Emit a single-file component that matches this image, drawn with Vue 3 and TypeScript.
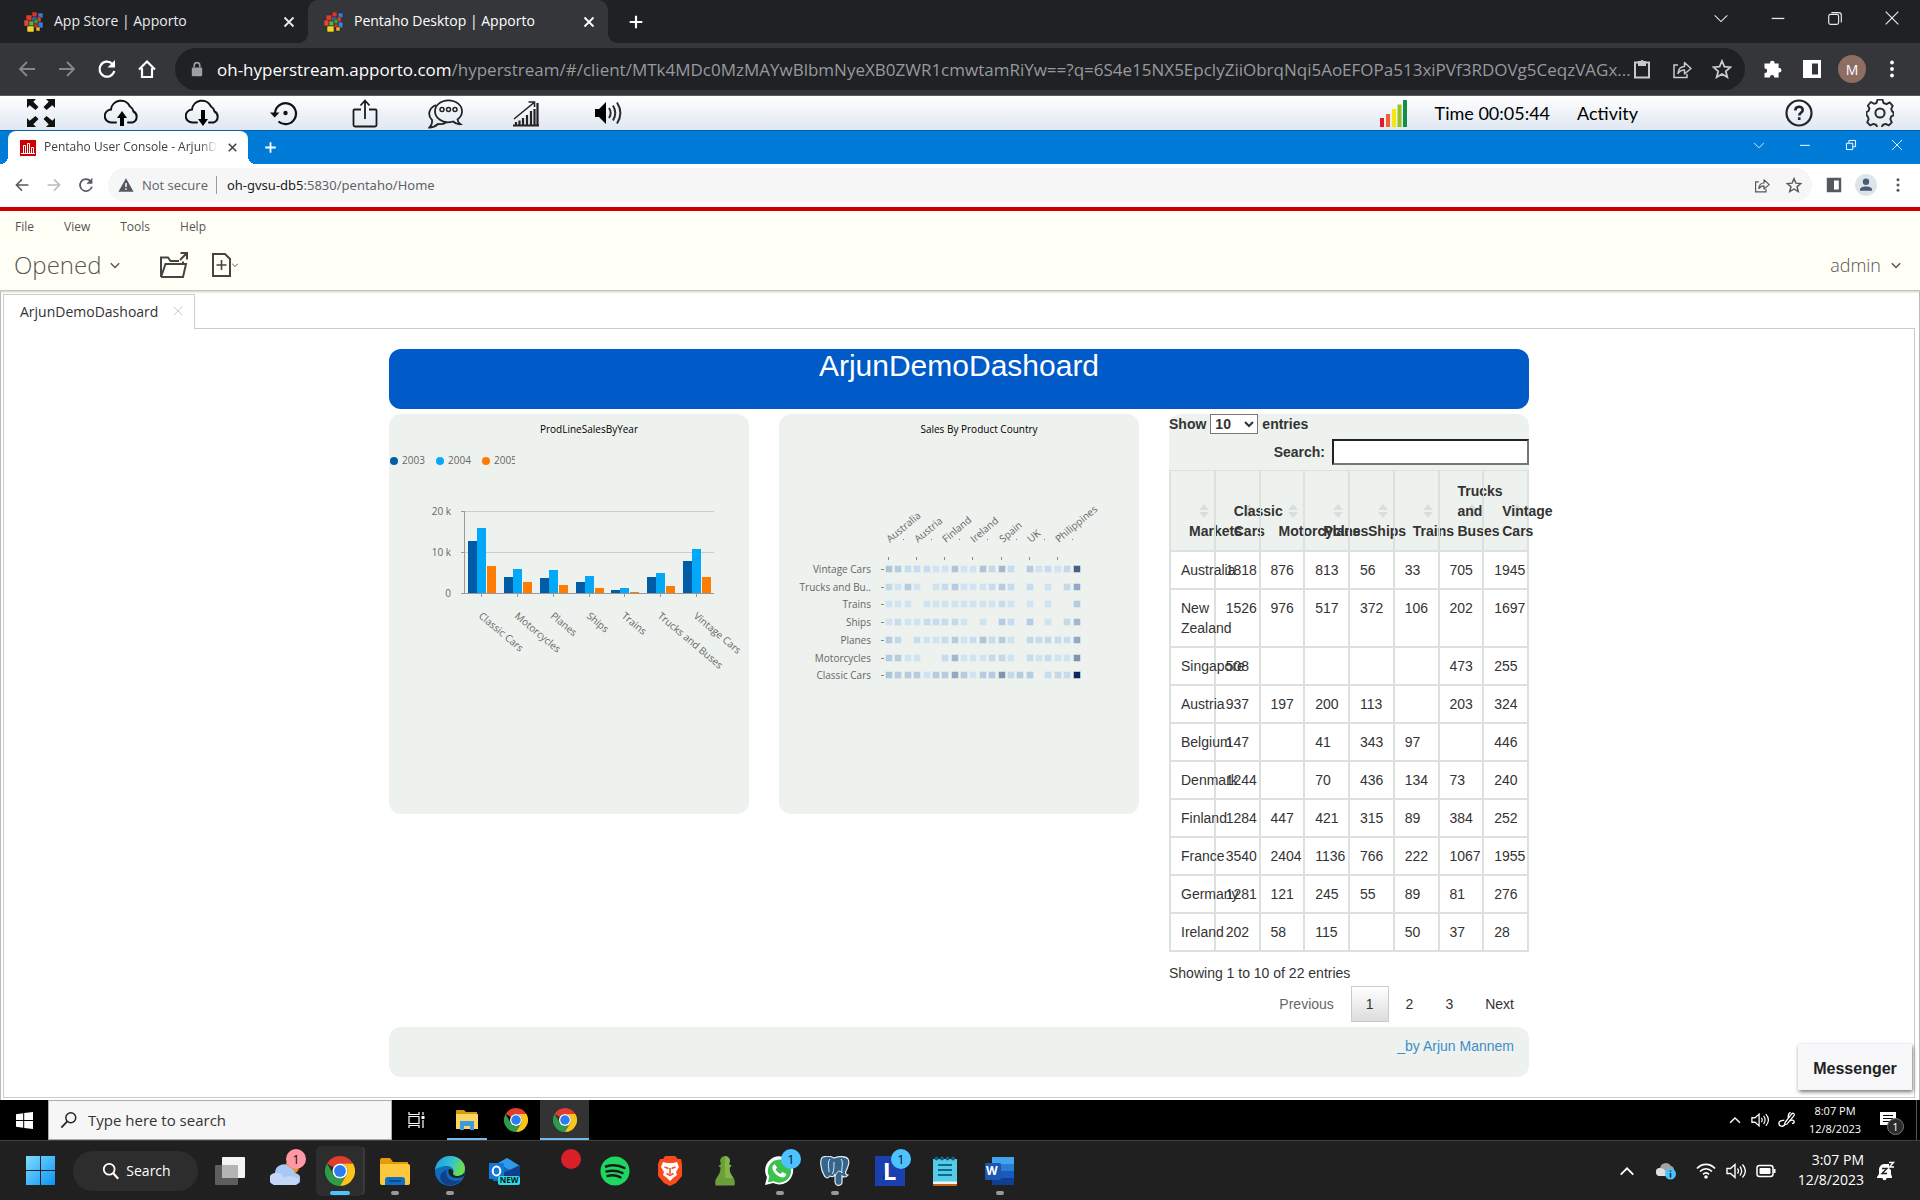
<script setup lang="ts">
const icons: Record<string, string> = {
  apporto:
    '<g stroke="#20201a" stroke-width=".5"><rect x="8" y="0" width="5" height="5" fill="#d8342a"/><rect x="14" y="1" width="5" height="5" rx="1" fill="#3a7bdc"/><rect x="2" y="3" width="6" height="6" rx="1" fill="#e23b2e"/><rect x="8" y="5" width="5" height="5" fill="#2f6fd0"/><rect x="13" y="5" width="4" height="5" rx="1" fill="#e2473a"/><rect x="14" y="10" width="5" height="6" rx="1" fill="#3a7bdc"/><rect x="0" y="8" width="5" height="6" fill="#e2473a"/><rect x="5" y="9" width="5" height="5" fill="#58b04a"/><rect x="10" y="7" width="4" height="5" fill="#3f9b3c"/><rect x="10" y="12" width="4" height="4" fill="#d93328"/><rect x="3" y="14" width="7" height="6" rx="1" fill="#f2d22e"/><rect x="12" y="15" width="4" height="4" fill="#e8b52c"/></g>',
  close: '<path d="M5 5l10 10M15 5L5 15" stroke="currentColor" stroke-width="2" fill="none"/>',
  plus: '<path d="M10 3v14M3 10h14" stroke="currentColor" stroke-width="2.4" fill="none"/>',
  chevThin: '<path d="M3 7l7 7 7-7" stroke="currentColor" stroke-width="1.2" fill="none"/>',
  chev: '<path d="M3 7l7 7 7-7" stroke="currentColor" stroke-width="2.4" fill="none"/>',
  chevUp: '<path d="M3 14l7-7 7 7" stroke="currentColor" stroke-width="2" fill="none"/>',
  minus: '<path d="M3 10.500h14" stroke="currentColor" stroke-width="1.400" fill="none"/>',
  restore11: '<rect x="3" y="6" width="11" height="11" rx="2" stroke="currentColor" stroke-width="1.3" fill="none"/><path d="M6 4h8a3 3 0 013 3v8" stroke="currentColor" stroke-width="1.300" fill="none"/>',
  restore10: '<path d="M3.500 7.500h9v9h-9zM7 7V3.500h9.500v9H13" stroke="currentColor" stroke-width="1.4" fill="none"/>',
  x: '<path d="M3 3l14 14M17 3L3 17" stroke="currentColor" stroke-width="1.3" fill="none"/>',
  back: '<path d="M18 10H3M10 3l-7 7 7 7" stroke="currentColor" stroke-width="1.900" fill="none"/>',
  forward: '<path d="M2 10h15M10 3l7 7-7 7" stroke="currentColor" stroke-width="1.900" fill="none"/>',
  reload: '<path d="M15.500 5A7.500 7.500 0 1017.300 12" stroke="currentColor" stroke-width="2.200" fill="none"/><path d="M18 1v7.500h-7.500z" fill="currentColor"/>',
  home: '<path d="M2 10.500L10 2.500l8 8M5 9v9h10V9" stroke="currentColor" stroke-width="2.2" fill="none"/>',
  lock: '<rect x="3.500" y="8" width="13" height="11" rx="1.500" fill="currentColor"/><path d="M6.500 8V5.500a3.500 3.500 0 017 0V8" stroke="currentColor" stroke-width="2" fill="none"/>',
  clipboard: '<path d="M3 3.500h14V18.500H3z" stroke="currentColor" stroke-width="2" fill="none"/><path d="M6 2h2.500a1.600 1.600 0 013 0H14v5H6z" fill="currentColor"/>',
  share: '<path d="M6 6H2v12.500h13V15" stroke="currentColor" stroke-width="1.500" fill="none"/><path d="M6 14.500c.5-5 3-7 6.500-7V3.500l6.500 6-6.500 5.500v-4c-3 0-4.800 1-6.500 3.500z" stroke="currentColor" stroke-width="1.500" stroke-linejoin="round" fill="none"/>',
  star: '<path d="M10 2l2.400 5.700 6.100.5-4.700 4 1.500 6L10 15l-5.300 3.200 1.500-6-4.700-4 6.100-.5z" stroke="currentColor" stroke-width="1.800" fill="none"/>',
  puzzle: '<path d="M8 4a2.300 2.300 0 014.600 0v.5h4V9h.6a2.300 2.300 0 010 4.600h-.6V18.500h-4.400V18a2 2 0 00-4.200 0v.5H2.500V14H3a2.200 2.200 0 000-4.400h-.5v-5H8z" fill="currentColor"/>',
  panelLight: '<path fill-rule="evenodd" d="M1 1h18v18H1zM10 4.500v11h6v-11z" fill="currentColor"/>',
  dots: '<circle cx="10" cy="3.500" r="1.900" fill="currentColor"/><circle cx="10" cy="10" r="1.900" fill="currentColor"/><circle cx="10" cy="16.500" r="1.900" fill="currentColor"/>',
  person: '<circle cx="10" cy="10" r="10" fill="#dce6e9"/><circle cx="10" cy="7" r="2.900" fill="#4a5a78"/><path d="M4.500 14.300c0-3.800 11-3.800 11 0v.9h-11z" fill="#4a5a78"/>',
  warn: '<path fill-rule="evenodd" d="M10 1.500L19.500 18.500H.5zM9 7.500v5h2v-5zM9 14v2h2v-2z" fill="currentColor"/>',
  expand: '<path d="M0 0h9L6.300 2.700 11.500 8 8.500 11 2.700 6.300 0 9zM28 0v9l-2.700-2.700L19.500 11l-3-3 5.200-5.300L19 0zM0 28v-9l2.700 2.700L8.500 17l3 3-5.200 5.300L9 28zM28 28h-9l2.700-2.700L16.500 20l3-3 5.800 4.700L28 19z" fill="#111"/>',
  cloudUp: '<path d="M12 23.500H7.500a6.500 6.500 0 01-.5-13A10 10 0 0126 7.500a7 7 0 013.500 5A6 6 0 0128.500 23.500H24" stroke="#111" stroke-width="2" fill="none" stroke-linecap="round"/><path d="M18 12l5 7h-3v8h-4v-8h-3z" fill="#000"/>',
  cloudDown: '<path d="M12 23.500H7.500a6.500 6.500 0 01-.5-13A10 10 0 0126 7.500a7 7 0 013.500 5A6 6 0 0128.500 23.500H24" stroke="#111" stroke-width="2" fill="none" stroke-linecap="round"/><path d="M18 27l-5-7h3v-9h4v9h3z" fill="#000"/>',
  history: '<path d="M5 13A10.500 10.500 0 118.500 21.500" stroke="#111" stroke-width="2.200" fill="none"/><path d="M0 12.500h9.500L4.700 17.500z" fill="#111"/><circle cx="15.500" cy="13" r="2.200" fill="#111"/>',
  upload: '<path d="M9 10.500H2.500a1 1 0 00-1 1V26a1.500 1.500 0 001.500 1.500h20a1.500 1.500 0 001.500-1.500V11.500a1 1 0 00-1-1H17M13 20V2M8.500 6.500L13 1.500l4.500 5" stroke="#1c1c1c" stroke-width="1.800" fill="none"/>',
  chat: '<path d="M11.500 22.500a13.500 11 0 1118 0c.3 2.300 1.300 3.500 3 4.700-3 .2-5.500-.8-7.500-2.700-4.500 1.400-9.500 1-13.500-2z" stroke="#222" stroke-width="1.800" fill="none"/><path d="M8 8C1 11-1 18 4 23c.5 3-.5 5.500-2.500 7.500 4 0 6-1.200 8.500-3.500 3 .5 5.500.2 8-1.500" stroke="#222" stroke-width="1.800" fill="none"/><g stroke="#222" stroke-width="1.500" fill="none"><circle cx="14" cy="12.500" r="2"/><circle cx="20.500" cy="12.500" r="2"/><circle cx="27" cy="12.500" r="2"/></g>',
  chart: '<path d="M0 25.500h26M3 25v-3M6.500 25v-4.500M10 25v-7M14 25V15M18 25V11M21.500 25V9M24.500 25V3" stroke="#222" stroke-width="2.200" fill="none"/><path d="M1 19L20.500 3M15.500 2h6v5" stroke="#222" stroke-width="1.600" fill="none"/>',
  speaker: '<path d="M1 8h4l7-7v22l-7-7H1z" fill="#000"/><path d="M15 7c2 3 2 7 0 10M19 4.500c3 5 3 10 0 15M23 1.500c4.500 7 4.500 14 0 21" stroke="#2b2b2b" stroke-width="2" fill="none"/>',
  signal: '<path d="M0 18h4v9H0z" fill="#e2182c"/><path d="M6 14h4v13H6z" fill="#f0642a"/><path d="M12 9h4v18h-4z" fill="#f6e60c"/><path d="M17.500 4.500h4V27h-4z" fill="#98c21f"/><path d="M23 0h4v27h-4z" fill="#119048"/>',
  help: '<circle cx="14" cy="14" r="12.500" stroke="#242424" stroke-width="2.200" fill="none"/><path d="M10.300 11.500c0-5 7.400-5 7.400-.5 0 2.800-3.500 2.600-3.500 5.500M14.200 18.300v2.800" stroke="#242424" stroke-width="2.600" fill="none"/>',
  gear: '<path d="M11.500 1.500h5l1 3.500 3 1.200 3.200-1.800 3 3.500-1.500 3 .9 2.500 1.500 1v3l-2.300 1-1 2.800 1.500 3.200-3 3-3.300-1.500-2.800 1.100-1.200 3h-4l-1.200-3-2.800-1.100-3.300 1.500-3-3 1.500-3.200-1-2.800L.5 17v-3l2-1 .9-2.500-1.500-3 3-3.500L8 5.800 10.500 5z" transform="translate(0 -1)" stroke="#2a2a2a" stroke-width="1.900" stroke-linejoin="round" fill="none"/><circle cx="14" cy="14" r="4.600" stroke="#2a2a2a" stroke-width="2" fill="none"/>',
  pentaho: '<rect width="16" height="16" fill="#c00"/><path d="M1 13.500h14M3.500 13V5.500h2V13M7.500 13V3.500h2V13M11.500 13V7.500h2V13" stroke="#fff" stroke-width="1" fill="none"/>',
  openFolder: '<path d="M1 25V5.500h7l2.500 3.500H19M1 25h22l3-13H5.500L1 25M20 8l7-7M20.500 1H27v6.500M23 12V9.500" stroke="#444" stroke-width="2" fill="none"/>',
  newDoc: '<path d="M1 1h12l5 5v17H1z" stroke="#444" stroke-width="2" fill="none"/><path d="M9.500 7v10M4.500 12h10" stroke="#444" stroke-width="1.600" fill="none"/>',
  win10: '<path d="M0 2.300L7.200 1.200V8H0zM8.200 1L17 0v8H8.200zM0 9h7.200v6.800L0 14.700zM8.200 9H17v8l-8.800-1z" fill="#fff"/>',
  win11: '<defs><linearGradient id="w11" x1="0" y1="0" x2="1" y2="1"><stop offset="0" stop-color="#7fdcff"/><stop offset="1" stop-color="#0a93f5"/></linearGradient></defs><path d="M0 0h14v14H0zM15 0h14v14H15zM0 15h14v14H0zM15 15h14v14H15z" fill="url(#w11)"/>',
  glass: '<circle cx="12" cy="7.500" r="5.500" stroke="currentColor" stroke-width="1.600" fill="none"/><path d="M8 11.500L1.500 18.500" stroke="currentColor" stroke-width="1.800"/>',
  glassR: '<circle cx="8" cy="8" r="6" stroke="currentColor" stroke-width="2" fill="none"/><path d="M12.500 12.500L18 18.500" stroke="currentColor" stroke-width="2.400"/>',
  taskView10: '<path d="M1 1v2.500h10V1M1 17v-2.500h10V17M1 5.500h10v7H1zM15 1v3M15 9v8" stroke="#fff" stroke-width="1.200" fill="none"/><path d="M13.500 5h3v3h-3z" fill="#fff"/>',
  folder10: '<path d="M0 1a1 1 0 011-1h7l2 2h11v6H0z" fill="#d79a0b"/><path d="M0 4h22v15H0z" fill="#fcd462"/><path d="M4 20v-9h14v9h-4v-4H8v4z" fill="#3c9be0"/>',
  chrome: '<path d="M24 0A24 24 0 0144.800 12H24a12 12 0 00-10.400 6L3.200 12A24 24 0 0124 0z" fill="#e33b2e"/><path d="M3.200 12A24 24 0 0024 48l10.400-18a12 12 0 01-20.800 0z" fill="#2c9c4a"/><path d="M44.800 12A24 24 0 0124 48l10.400-18A12 12 0 0024 12z" fill="#fcc419"/><circle cx="24" cy="24" r="12" fill="#fff"/><circle cx="24" cy="24" r="9.500" fill="#2f7bf0"/>',
  taskView11: '<rect x="0" y="8" width="23" height="20" rx="1" fill="#5e5e5e"/><rect x="7" y="0" width="23" height="21" rx="1" fill="#f4f4f4"/><path d="M7 8h16v13H7z" fill="#b4b4b4"/>',
  weather: '<circle cx="22" cy="10" r="7" fill="#f28a1e"/><path d="M6 28a6 6 0 01-1-12 8.500 8.500 0 0115-5.500A8 8 0 0125 16a6 6 0 01-1 12z" fill="#a9c7f5"/><path d="M6 28a6 6 0 01-1-12c4-1 8 1 8 5 5-3 12-2 16 1a6 6 0 01-5 6z" fill="#c3d7f8"/>',
  folder11: '<path d="M0 3a2 2 0 012-2h8l3 4h15v8H0z" fill="#e59a0c"/><path d="M0 7h28a2 2 0 012 2v17a2 2 0 01-2 2H2a2 2 0 01-2-2z" fill="#fdc83c"/><path d="M5 28v-5a3 3 0 013-3h14a3 3 0 013 3v5z" fill="#0f6fc5"/><path d="M9 24h12" stroke="#0a4a90" stroke-width="2"/>',
  edge: '<defs><linearGradient id="eg" x1="0" y1="0" x2="1" y2=".3"><stop offset="0" stop-color="#1b9de2"/><stop offset=".6" stop-color="#35c1d0"/><stop offset="1" stop-color="#6be04b"/></linearGradient></defs><circle cx="15" cy="15" r="15" fill="#0f6cbd"/><path d="M0 14C1 5 8 0 15 0c9 0 15 6 15 12.500 0 5-4 7.500-8 7.500-3 0-5-1-4-3 2-3-1-7-6-7-5 0-10 2-12 4z" fill="url(#eg)"/><path d="M12 14c-3 7 4 13 14 10-5 6-13 7-18 3-5-5-3-11 4-13z" fill="#123f8a"/><path d="M14 13c-2 4 1 9 8 9 3 0 5-1 7-2l1-3-3 2c-4 2-8 1-9-1 1-3-1-5-4-5z" fill="#202020"/>',
  outlook: '<path d="M4 10L18 1l13 9v14H4z" fill="#1568c0"/><path d="M9 6l9-5 13 8-7 6z" fill="#2f9ae8"/><path d="M14 16l17-8v16H14z" fill="#0d3f8e"/><rect x="0" y="6" width="15" height="16" rx="1" fill="#1177d8"/><ellipse cx="7.500" cy="14" rx="3.800" ry="4.500" stroke="#fff" stroke-width="2" fill="none"/><rect x="9" y="19" width="22" height="9" rx="2" fill="#27e0e8"/>',
  spotify: '<circle cx="15" cy="15" r="14.500" fill="#1ed760"/><path d="M6 10.500c6-2 13-1.500 18.500 1.500M6.500 15.500c5.500-1.500 11-1 16 1.500M7.500 20c4.500-1.200 9-.8 13 1.300" stroke="#1c1c1c" stroke-width="2.500" fill="none" stroke-linecap="round"/>',
  brave: '<path d="M8 0h10l3 3 3 0 1 5 0 12-6 7-6 3-6-3-6-7L1 8l2-5 3 0z" fill="#fb4a1c"/><path d="M6 6l4 1h6l4-1 2 5-3 5 1 3-4 3-3 3-3-3-4-3 1-3-3-5z" fill="#fff"/><path d="M7.500 11l4 1.500M18.500 11l-4 1.500M13 12v6M9.500 17.500l3.500 2 3.500-2" stroke="#fb4a1c" stroke-width="1.500" fill="none"/>',
  chess: '<path d="M10 0a5 5 0 014 8l2.500 2-2 1.500c0 5 1.500 7 4 10.500 1.500 2 1.500 5 1 7.500H.5C0 27 0 24 1.500 22c2.500-3.500 4-5.500 4-10.500L3.500 10 6 8a5 5 0 014-8z" fill="#6a9f3a"/><path d="M10 0a5 5 0 014 8l2.500 2-2 1.500c0 5 1.500 7 4 10.500H10z" fill="#82b64b"/>',
  whatsapp: '<path d="M0 30l2-8A14.500 14.500 0 118.500 28z" fill="#fff"/><path d="M3 27l1.500-5.500A12 12 0 119 26z" fill="#3cc14e"/><path d="M10 8.500l2.500 3.500-1.500 2c1 2 2.500 3.500 5 4.500l2-2 4 2c0 3-3 4-5 3.500C12 21 8 16 7.500 12.500c0-2 1-3.500 2.500-4z" fill="#fff"/>',
  pg: '<path d="M3 1c6-2 9 0 11 1 5-2 12-2 14 1s0 8-2 12c-1 2 0 4 2 4-2 3-5 2-6 1v6c0 4-6 5-7 0v-8c-1 3-3 3-5 2-2 3-5 2-6-1C1 14-1 3 3 1z" fill="#35648c" stroke="#e8eef4" stroke-width="1.200"/><path d="M10 3c-3 4-1 8-1 13M21 3c3 4 0 9 1 14M12 18c2-2 2-7 2-12M15 20c2-4 4-7 7-3" stroke="#e8eef4" stroke-width="1" fill="none"/>',
  lapp: '<path d="M0 0h30v30H0z" fill="#1c3fae"/><path d="M8 23l3-16v16z" fill="#0b1d5c"/>',
  notes: '<path d="M1 3h24v23H1z" fill="#58cbe4"/><path d="M1 26h24v3a1 1 0 01-1 1H2a1 1 0 01-1-1z" fill="#c46316"/><path d="M1 25.500h24V28H1z" fill="#f3f3f3"/><path d="M6 9h14M6 14h14M6 19h14" stroke="#0a6b90" stroke-width="2"/><g fill="#0d5f83"><circle cx="4.500" cy="2.500" r="2"/><circle cx="10" cy="2.500" r="2"/><circle cx="15.500" cy="2.500" r="2"/><circle cx="21" cy="2.500" r="2"/></g>',
  word: '<path d="M7 0h22v7H7z" fill="#41a5ee"/><path d="M7 7h22v7H7z" fill="#2b7cd3"/><path d="M7 14h22v7H7z" fill="#185abd"/><path d="M7 21h22v7H7z" fill="#103f91"/><rect x="0" y="6" width="16" height="17" rx="1.500" fill="#1a56b4"/>',
  speakerThin: '<path d="M1 7.500h3.500L9 3.500v13L4.500 12.500H1z" stroke="currentColor" stroke-width="1.400" fill="none"/><path d="M11.500 7.500c1.200 1.500 1.200 3.500 0 5M14 5.500c2.200 3 2.200 6 0 9M16.500 3.500c3.500 4 3.500 9 0 13" stroke="currentColor" stroke-width="1.300" fill="none"/>',
  pen: '<path d="M8 12.500l7-9c1.500-2 4-.5 2.800 1.700L10 14.500l-3 .8z" stroke="currentColor" stroke-width="1.400" fill="none"/><path d="M11.500 8c-.5-3 .5-5.500 2.500-6.500M7 10.500c-3-.5-6 .5-6 3.500s4.500 4 6.500 1.500M13 11c2-1.500 5-1 5 1s-2.500 2-2.500 2" stroke="currentColor" stroke-width="1.500" fill="none"/>',
  action: '<path d="M0 0h16v13h-5l-3 3v-3H0z" fill="#fff"/><path d="M3 3.500h10M3 6.500h10M3 9.500h10" stroke="#000" stroke-width="1.200"/>',
  cloudInfo: '<path d="M4 15a4 4 0 010-8 6 6 0 0111-2 4 4 0 013 4v6z" fill="#a3a3a3"/><path d="M4 15a4 4 0 010-8c4 0 6 3 8 8z" fill="#e0e0e0"/><circle cx="14.500" cy="13" r="5.500" fill="#4cc2ff"/><path d="M14.500 12v4.500M14.500 9.500v1.300" stroke="#10303f" stroke-width="1.600"/>',
  wifi: '<path d="M1 7.500c5-5.500 13-5.500 18 0M4 10.500c3.500-3.700 8.500-3.700 12 0M7 13.300c2-2 4-2 6 0" stroke="currentColor" stroke-width="1.700" fill="none"/><circle cx="10" cy="16" r="1.800" fill="currentColor"/>',
  battery: '<rect x="1" y="4.500" width="16" height="11" rx="2.500" stroke="currentColor" stroke-width="1.500" fill="none"/><rect x="3.500" y="7" width="11" height="6" rx="1" fill="currentColor"/><path d="M18.500 8v4" stroke="currentColor" stroke-width="2"/>',
  bell: '<path d="M8.500 3C5 3 3 6 3 9v4l-2 3v1h15v-1l-1-3V9" fill="currentColor"/><path d="M6.500 17h4c0 3-4 3-4 0z" fill="currentColor"/><path d="M8 3h5v10H6z" fill="currentColor"/><path d="M6 7.500h5L6 12.500h5" stroke="#202020" stroke-width="1.400" fill="none"/><path d="M13 1.500h4.500L13.500 6H18" stroke="currentColor" stroke-width="1.400" fill="none"/>',
}

interface Control { icon: string; label: string }
const outerWindow: Control[] = [
  { icon: 'chevThin', label: 'Search tabs' },
  { icon: 'minus', label: 'Minimize' },
  { icon: 'restore11', label: 'Restore' },
  { icon: 'x', label: 'Close' },
]
const innerWindow: Control[] = outerWindow.map((c) => (c.icon === 'restore11' ? { ...c, icon: 'restore10' } : c))

const sessionTools = [
  { icon: 'expand', label: 'Full screen', w: 28, h: 28 },
  { icon: 'cloudUp', label: 'Upload file', w: 36, h: 28 },
  { icon: 'cloudDown', label: 'Download file', w: 36, h: 28 },
  { icon: 'history', label: 'Restart', w: 28, h: 26 },
  { icon: 'upload', label: 'Share', w: 26, h: 29 },
  { icon: 'chat', label: 'Chat', w: 36, h: 32 },
  { icon: 'chart', label: 'Performance', w: 27, h: 27 },
  { icon: 'speaker', label: 'Sound', w: 28, h: 24 },
]

const menus = ['File', 'View', 'Tools', 'Help']

/* Bar chart: heights in plot units, 41 units per 10 k */
const years = [
  { label: '2003', color: '#005ca7', x: 5 },
  { label: '2004', color: '#03a9f8', x: 51 },
  { label: '2005', color: '#ff7c00', x: 97 },
]
const lines = [
  { label: 'Classic Cars', x: 92, bars: [52, 65, 27] },
  { label: 'Motorcycles', x: 128, bars: [16, 24, 11] },
  { label: 'Planes', x: 164, bars: [15, 23, 8] },
  { label: 'Ships', x: 200, bars: [11, 17, 5] },
  { label: 'Trains', x: 235, bars: [3, 5, 1] },
  { label: 'Trucks and Buses', x: 271, bars: [16, 20, 7] },
  { label: 'Vintage Cars', x: 307, bars: [32, 44, 16] },
]
const barOffset = [-13, -4, 6]

/* Heat grid: one letter per country, darker further down the alphabet */
const shades: Record<string, string> = {
  a: '#d0e3f0', b: '#c6dcf0', c: '#c4dae6', d: '#b6cde0', e: '#adc5d4',
  f: '#a3b8cf', g: '#92a9c5', h: '#7f96b2', i: '#45608a', j: '#0a2a5c',
}
const heat = [
  { label: 'Vintage Cars', cells: 'edbbbaaeaaecfb-dabaci' },
  { label: 'Trucks and Bu..', cells: 'cada-abdaaabdb-b-a-cg' },
  { label: 'Trains', cells: 'aaa-aaaaaaaaba-a-a--d' },
  { label: 'Ships', cells: 'abaabbbca-a-db-d-a-cf' },
  { label: 'Planes', cells: 'dc-baabdabebda-cbcbbg' },
  { label: 'Motorcycles', cells: 'ddaa--bfaaacca-babaah' },
  { label: 'Classic Cars', cells: 'edddaddgdaddhcdd-bcbj' },
]
const countries = ['Australia', 'Austria', 'Finland', 'Ireland', 'Spain', 'UK', 'Philippines']
const colX = (i: number): number => Math.round(110 + i * 9.38)
const rowY = (i: number): number => Math.round(155 + i * 17.7)

const headers = ['Markets', 'Classic Cars', 'Motorcycles', 'Planes', 'Ships', 'Trains', 'Trucks and Buses', 'Vintage Cars']
const rows: string[][] = [
  ['Australia', '1818', '876', '813', '56', '33', '705', '1945'],
  ['New Zealand', '1526', '976', '517', '372', '106', '202', '1697'],
  ['Singapore', '508', '', '', '', '', '473', '255'],
  ['Austria', '937', '197', '200', '113', '', '203', '324'],
  ['Belgium', '147', '', '41', '343', '97', '', '446'],
  ['Denmark', '1244', '', '70', '436', '134', '73', '240'],
  ['Finland', '1284', '447', '421', '315', '89', '384', '252'],
  ['France', '3540', '2404', '1136', '766', '222', '1067', '1955'],
  ['Germany', '1281', '121', '245', '55', '89', '81', '276'],
  ['Ireland', '202', '58', '115', '', '50', '37', '28'],
]

interface TaskApp { icon: string; label: string; w: number; h: number; vb: string; run?: boolean; active?: boolean; badge?: string; tone?: string; text?: string; textCls?: string }
const apps: TaskApp[] = [
  { icon: 'taskView11', label: 'Task view', w: 30, h: 28, vb: '0 0 30 28' },
  { icon: 'weather', label: 'Weather', w: 30, h: 28, vb: '0 0 30 28', badge: '1', tone: 'pink' },
  { icon: 'chrome', label: 'Chrome', w: 30, h: 30, vb: '0 0 48 48', active: true },
  { icon: 'folder11', label: 'File Explorer', w: 30, h: 28, vb: '0 0 30 28', run: true },
  { icon: 'edge', label: 'Edge', w: 30, h: 30, vb: '0 0 30 30', run: true },
  { icon: 'outlook', label: 'Outlook', w: 31, h: 28, vb: '0 0 31 28', text: 'NEW', textCls: 'new' },
  { icon: '', label: 'Recorder', w: 30, h: 30, vb: '0 0 30 30', badge: ' ', tone: 'red' },
  { icon: 'spotify', label: 'Spotify', w: 30, h: 30, vb: '0 0 30 30' },
  { icon: 'brave', label: 'Brave', w: 26, h: 30, vb: '0 0 26 30' },
  { icon: 'chess', label: 'Chess', w: 20, h: 30, vb: '0 0 20 30' },
  { icon: 'whatsapp', label: 'WhatsApp', w: 30, h: 30, vb: '0 0 31 31', run: true, badge: '1', tone: 'blue' },
  { icon: 'pg', label: 'pgAdmin', w: 30, h: 30, vb: '0 0 30 30', run: true },
  { icon: 'lapp', label: 'LockDown', w: 30, h: 30, vb: '0 0 30 30', badge: '1', tone: 'blue', text: 'L', textCls: 'ell' },
  { icon: 'notes', label: 'Notepad', w: 26, h: 30, vb: '0 0 26 30' },
  { icon: 'word', label: 'Word', w: 29, h: 28, vb: '0 0 29 28', run: true, text: 'W', textCls: 'dub' },
]
</script>

<template>
  <div class="screen">
    <header class="o-tabs">
      <div class="o-tab">
        <svg class="fav" viewBox="0 0 20 20" v-html="icons.apporto" />
        <span>App Store | Apporto</span>
        <button aria-label="Close tab"><svg viewBox="0 0 20 20" v-html="icons.close" /></button>
      </div>
      <div class="o-tab on">
        <svg class="fav" viewBox="0 0 20 20" v-html="icons.apporto" />
        <span>Pentaho Desktop | Apporto</span>
        <button aria-label="Close tab"><svg viewBox="0 0 20 20" v-html="icons.close" /></button>
      </div>
      <button class="o-new" aria-label="New tab"><svg viewBox="0 0 20 20" v-html="icons.plus" /></button>
      <div class="o-win">
        <button v-for="c in outerWindow" :key="c.icon" :aria-label="c.label"><svg viewBox="0 0 20 20" v-html="icons[c.icon]" /></button>
      </div>
    </header>

    <nav class="o-bar">
      <button class="dim" aria-label="Back"><svg viewBox="0 0 20 20" v-html="icons.back" /></button>
      <button class="dim" aria-label="Forward"><svg viewBox="0 0 20 20" v-html="icons.forward" /></button>
      <button aria-label="Reload"><svg viewBox="0 0 20 20" v-html="icons.reload" /></button>
      <button aria-label="Home"><svg viewBox="0 0 20 20" v-html="icons.home" /></button>
      <div class="o-omni">
        <svg class="lock" viewBox="0 0 20 20" v-html="icons.lock" />
        <span class="o-url"><b>oh-hyperstream.apporto.com</b>/hyperstream/#/client/MTk4MDc0MzMAYwBlbmNyeXB0ZWR1cmwtamRiYw==?q=6S4e15NX5EpclyZiiObrqNqi5AoEFOPa513xiPVf3RDOVg5CeqzVAGx...</span>
        <button aria-label="Clipboard"><svg viewBox="0 0 20 20" v-html="icons.clipboard" /></button>
        <button aria-label="Share"><svg viewBox="0 0 20 20" v-html="icons.share" /></button>
        <button aria-label="Bookmark"><svg viewBox="0 0 20 20" v-html="icons.star" /></button>
      </div>
      <button aria-label="Extensions"><svg viewBox="0 0 20 20" v-html="icons.puzzle" /></button>
      <button aria-label="Side panel"><svg viewBox="0 0 20 20" v-html="icons.panelLight" /></button>
      <button aria-label="Profile"><span class="o-me">M</span></button>
      <button aria-label="Menu"><svg viewBox="0 0 20 20" v-html="icons.dots" /></button>
    </nav>

    <div class="session">
      <button v-for="t in sessionTools" :key="t.icon" class="s-btn" :aria-label="t.label">
        <svg :width="t.w" :height="t.h" :viewBox="`0 0 ${t.w} ${t.h}`" v-html="icons[t.icon]" />
      </button>
      <svg class="s-signal" width="27" height="27" viewBox="0 0 27 27" v-html="icons.signal" />
      <span class="s-time">Time 00:05:44</span>
      <span class="s-act">Activity</span>
      <button class="s-btn" aria-label="Help"><svg width="28" height="28" viewBox="0 0 28 28" v-html="icons.help" /></button>
      <button class="s-btn" aria-label="Settings"><svg width="28" height="28" viewBox="0 0 28 28" v-html="icons.gear" /></button>
    </div>

    <section class="remote">
      <header class="i-tabs">
        <div class="i-tab">
          <svg width="16" height="16" viewBox="0 0 16 16" v-html="icons.pentaho" />
          <span>Pentaho User Console - ArjunDemoDashoard</span>
          <button aria-label="Close tab"><svg viewBox="0 0 20 20" v-html="icons.close" /></button>
        </div>
        <button class="i-new" aria-label="New tab"><svg viewBox="0 0 20 20" v-html="icons.plus" /></button>
        <div class="i-win">
          <button v-for="c in innerWindow" :key="c.icon" :aria-label="c.label"><svg viewBox="0 0 20 20" v-html="icons[c.icon]" /></button>
        </div>
      </header>
      <nav class="i-bar">
        <button aria-label="Back"><svg viewBox="0 0 20 20" v-html="icons.back" /></button>
        <button class="dim" aria-label="Forward"><svg viewBox="0 0 20 20" v-html="icons.forward" /></button>
        <button aria-label="Reload"><svg viewBox="0 0 20 20" v-html="icons.reload" /></button>
        <div class="i-omni">
          <svg class="warn" viewBox="0 0 20 20" v-html="icons.warn" />
          <span class="i-sec">Not secure</span>
          <span class="i-url"><b>oh-gvsu-db5</b>:5830/pentaho/Home</span>
          <button aria-label="Share"><svg viewBox="0 0 20 20" v-html="icons.share" /></button>
          <button aria-label="Bookmark"><svg viewBox="0 0 20 20" v-html="icons.star" /></button>
        </div>
        <button aria-label="Side panel"><svg viewBox="0 0 20 20" v-html="icons.panelLight" /></button>
        <button aria-label="Profile"><svg class="i-me" viewBox="0 0 20 20" v-html="icons.person" /></button>
        <button aria-label="Menu"><svg viewBox="0 0 20 20" v-html="icons.dots" /></button>
      </nav>

      <div class="puc">
        <div class="puc-menu">
          <button v-for="m in menus" :key="m">{{ m }}</button>
        </div>
        <div class="puc-tools">
          <button class="opened">Opened <svg class="c12" viewBox="0 0 20 20" v-html="icons.chev" /></button>
          <button class="t-open" aria-label="Open"><svg width="29" height="26" viewBox="0 0 29 26" v-html="icons.openFolder" /></button>
          <button class="t-new" aria-label="New"><svg width="19" height="24" viewBox="0 0 19 24" v-html="icons.newDoc" /><svg class="c8" viewBox="0 0 20 20" v-html="icons.chev" /></button>
          <button class="admin">admin <svg class="c12" viewBox="0 0 20 20" v-html="icons.chev" /></button>
        </div>
      </div>

      <div class="stage">
        <div class="doc-tabs">
          <div class="doc-tab">
            <span>ArjunDemoDashoard</span>
            <button aria-label="Close"><svg viewBox="0 0 20 20" v-html="icons.x" /></button>
          </div>
          <div class="doc-rest"></div>
        </div>
        <main class="doc">
          <div class="dash">
            <h1>ArjunDemoDashoard</h1>
            <div class="cols">
              <div class="card">
                <svg class="plot" viewBox="0 0 360 400" role="img" aria-label="ProdLineSalesByYear">
                  <text class="ttl" x="200" y="19">ProdLineSalesByYear</text>
                  <g v-for="y in years" :key="y.label">
                    <circle :cx="y.x" cy="47" r="4" :fill="y.color" />
                    <text :x="y.x + 8" y="50">{{ y.label }}</text>
                  </g>
                  <rect x="126" y="40" width="8" height="14" fill="#edf2ee" />
                  <path d="M76 97.500h249M76 138.500h249" stroke="#cacdca" />
                  <g v-for="l in lines" :key="l.label">
                    <rect v-for="(b, i) in l.bars" :key="i" :x="l.x + barOffset[i]" :y="179 - b" width="9" :height="b" :fill="years[i].color" />
                    <path :d="`M${l.x + 0.5} 179v4`" stroke="#999" />
                    <text :transform="`translate(${l.x - 3} 203) rotate(40)`">{{ l.label }}</text>
                  </g>
                  <path d="M75.500 97v82.500M72 97.500h4M72 138.500h4M72 179.500h253" stroke="#999" fill="none" />
                  <text class="end" x="62" y="101">20 k</text>
                  <text class="end" x="62" y="142">10 k</text>
                  <text class="end" x="62" y="183">0</text>
                </svg>
              </div>
              <div class="card">
                <svg class="plot" viewBox="0 0 360 400" role="img" aria-label="Sales By Product Country">
                  <text class="ttl" x="200" y="19">Sales By Product Country</text>
                  <g v-for="(c, i) in countries" :key="c">
                    <text :transform="`translate(${colX(i * 3) + 1} 129) rotate(-40)`">{{ c }}</text>
                    <rect :x="colX(i * 3) + 14" y="125" width="1" height="1" fill="#777" />
                    <path :d="`M${colX(i * 3) - 0.5} 143v3`" stroke="#888" />
                  </g>
                  <g v-for="(r, j) in heat" :key="r.label">
                    <text class="end" x="92" :y="rowY(j) + 4">{{ r.label }}</text>
                    <path :d="`M102 ${rowY(j) + 0.5}h3`" stroke="#888" />
                    <template v-for="(s, i) in r.cells" :key="i">
                      <rect v-if="s !== '-'" :x="colX(i) - 3" :y="rowY(j) - 3" width="6" height="6" :fill="shades[s]" :stroke="shades[s]" stroke-opacity=".5" />
                    </template>
                  </g>
                </svg>
              </div>
              <div class="grid">
                <div class="g-top">
                  <label class="g-show">Show
                    <select><option>10</option><option>25</option></select>
                    entries</label>
                  <label class="g-search">Search: <input type="search" /></label>
                </div>
                <table>
                  <thead><tr><th v-for="h in headers" :key="h">{{ h }}</th></tr></thead>
                  <tbody>
                    <tr v-for="r in rows" :key="r[0]"><td v-for="(v, i) in r" :key="i">{{ v }}</td></tr>
                  </tbody>
                </table>
                <p class="g-info">Showing 1 to 10 of 22 entries</p>
                <div class="g-pages">
                  <button class="off">Previous</button>
                  <button class="cur">1</button>
                  <button>2</button>
                  <button>3</button>
                  <button>Next</button>
                </div>
              </div>
            </div>
            <footer><a href="#">_by Arjun Mannem</a></footer>
          </div>
          <button class="messenger">Messenger</button>
        </main>
      </div>

      <div class="w10">
        <button class="w10-start" aria-label="Start"><svg width="17" height="17" viewBox="0 0 17 17" v-html="icons.win10" /></button>
        <label class="w10-search">
          <svg viewBox="0 0 20 20" v-html="icons.glass" />
          <input type="text" aria-label="Search" placeholder="Type here to search" />
        </label>
        <button class="w10-app" aria-label="Task view"><svg width="17" height="18" viewBox="0 0 17 18" v-html="icons.taskView10" /></button>
        <button class="w10-app line" aria-label="File Explorer"><svg width="22" height="20" viewBox="0 0 22 20" v-html="icons.folder10" /></button>
        <button class="w10-app" aria-label="Chrome"><svg width="24" height="24" viewBox="0 0 48 48" v-html="icons.chrome" /></button>
        <button class="w10-app focus" aria-label="Chrome window"><svg width="24" height="24" viewBox="0 0 48 48" v-html="icons.chrome" /></button>
        <div class="w10-tray">
          <svg class="t14" viewBox="0 0 20 20" v-html="icons.chevUp" />
          <svg class="t18" viewBox="0 0 20 20" v-html="icons.speakerThin" />
          <svg class="t18" viewBox="0 0 20 20" v-html="icons.pen" />
          <span class="w10-clock">8:07 PM<br />12/8/2023</span>
          <span class="w10-note"><svg width="16" height="16" viewBox="0 0 16 16" v-html="icons.action" /><i>1</i></span>
        </div>
      </div>
    </section>

    <div class="w11">
      <button class="w11-start" aria-label="Start"><svg width="29" height="29" viewBox="0 0 29 29" v-html="icons.win11" /></button>
      <button class="w11-search"><svg viewBox="0 0 20 20" v-html="icons.glassR" />Search</button>
      <button v-for="a in apps" :key="a.label" class="w11-app" :class="{ run: a.run, active: a.active }" :aria-label="a.label">
        <svg :width="a.w" :height="a.h" :viewBox="a.vb" v-html="icons[a.icon] ?? ''" />
        <span v-if="a.text" :class="a.textCls">{{ a.text }}</span>
        <i v-if="a.badge" :class="a.tone">{{ a.badge }}</i>
      </button>
      <div class="w11-tray">
        <svg class="t18 up" viewBox="0 0 20 20" v-html="icons.chevUp" />
        <svg class="t20 cl" viewBox="0 0 20 20" v-html="icons.cloudInfo" />
        <svg class="t20" viewBox="0 0 20 20" v-html="icons.wifi" />
        <svg class="t20" viewBox="0 0 20 20" v-html="icons.speakerThin" />
        <svg class="t20" viewBox="0 0 20 20" v-html="icons.battery" />
        <span class="w11-clock">3:07 PM<br />12/8/2023</span>
        <svg class="t20" viewBox="0 0 20 20" v-html="icons.bell" />
      </div>
    </div>
  </div>
</template>

<style>
body {
  background: #202020;
}
</style>

<style scoped>
* {
  box-sizing: border-box;
}
button {
  border: 0;
  margin: 0;
  padding: 0;
  background: none;
  color: inherit;
  font: inherit;
  display: flex;
  align-items: center;
  justify-content: center;
  flex: none;
}
svg {
  display: block;
  flex: none;
}
b,
i {
  font-weight: inherit;
  font-style: normal;
}
.screen {
  min-height: 100vh;
  display: flex;
  flex-direction: column;
  font-family: "Open Sans", "Noto Sans", sans-serif;
  font-size: 14px;
}

/* outer browser */
.o-tabs {
  height: 43px;
  background: #202124;
  color: #e8eaed;
  display: flex;
  padding-left: 8px;
  font-size: 14px;
}
.o-tab {
  width: 300px;
  display: flex;
  align-items: center;
  padding: 0 10px 0 16px;
}
.o-tab.on {
  background: #35363a;
  border-radius: 10px 10px 0 0;
  position: relative;
  color: #fff;
}
.o-tab.on::before,
.o-tab.on::after {
  content: "";
  position: absolute;
  bottom: 0;
  width: 10px;
  height: 10px;
}
.o-tab.on::before {
  right: 100%;
  background: radial-gradient(circle at 0 0, transparent 10px, #35363a 10px);
}
.o-tab.on::after {
  left: 100%;
  background: radial-gradient(circle at 100% 0, transparent 10px, #35363a 10px);
}
.o-tab .fav {
  width: 20px;
  height: 20px;
  margin-right: 10px;
}
.o-tab span {
  flex: 1;
  white-space: nowrap;
  padding-bottom: 2px;
}
.o-tab button svg {
  width: 18px;
  height: 18px;
}
.o-new {
  width: 56px;
  color: #fff;
}
.o-new svg {
  width: 18px;
  height: 18px;
}
.o-win {
  margin-left: auto;
  display: flex;
  height: 36px;
}
.o-win button {
  width: 57px;
}
.o-win svg {
  width: 18px;
  height: 18px;
}
.o-bar {
  height: 53px;
  background: #35363a;
  border-bottom: 1px solid #5a5b5f;
  display: flex;
  align-items: center;
  padding: 0 8px 0 7px;
  color: #fff;
}
.o-bar button {
  width: 40px;
}
.o-bar svg {
  width: 20px;
  height: 20px;
}
.o-bar .dim {
  color: #84868a;
}
.o-omni {
  flex: 1;
  min-width: 0;
  height: 42px;
  border-radius: 21px;
  margin: 0 7px 0 8px;
  background: #202124;
  display: flex;
  align-items: center;
  padding: 0 3px 0 14px;
  color: #c8cacd;
}
.o-omni .lock {
  width: 16px;
  height: 16px;
  color: #9aa0a6;
  margin-right: 12px;
}
.o-url {
  flex: 1;
  min-width: 0;
  margin-right: -10px;
  white-space: nowrap;
  overflow: hidden;
  color: #969a9f;
  font-size: 17px;
}
.o-url b {
  color: #fff;
}
.o-me {
  width: 28px;
  height: 28px;
  border-radius: 50%;
  background: #8d6e63;
  display: flex;
  align-items: center;
  justify-content: center;
  font-size: 14px;
}

/* session toolbar */
.session {
  height: 34px;
  background: linear-gradient(#fff, #dfe7f2);
  display: flex;
  align-items: center;
  font-family: Lato, sans-serif;
  font-size: 18px;
  color: #000;
}
.s-btn {
  width: 81px;
}
.s-signal {
  margin-left: auto;
}
.s-time {
  margin-left: 28px;
}
.s-act {
  margin: 0 120px 0 27px;
}

/* remote browser */
.remote {
  flex: 1;
  display: flex;
  flex-direction: column;
  background: #fff;
}
.i-tabs {
  height: 34px;
  background: #007cd8;
  border-top: 1px solid #0562a8;
  display: flex;
  padding-left: 8px;
  color: #fff;
}
.i-tab {
  width: 240px;
  background: #fff;
  border-radius: 8px 8px 0 0;
  display: flex;
  align-items: center;
  padding: 0 8px 0 12px;
  color: #3c4043;
  font-size: 12px;
  position: relative;
}
.i-tab::before,
.i-tab::after {
  content: "";
  position: absolute;
  bottom: 0;
  width: 8px;
  height: 8px;
}
.i-tab::before {
  right: 100%;
  background: radial-gradient(circle at 0 0, transparent 8px, #fff 8px);
}
.i-tab::after {
  left: 100%;
  background: radial-gradient(circle at 100% 0, transparent 8px, #fff 8px);
}
.i-tab span {
  flex: 1;
  min-width: 0;
  margin: 0 8px;
  padding-bottom: 2px;
  overflow: hidden;
  white-space: nowrap;
  mask-image: linear-gradient(90deg, #000 90%, transparent);
}
.i-tab button svg,
.i-new svg {
  width: 15px;
  height: 15px;
}
.i-new {
  width: 44px;
}
.i-win {
  margin-left: auto;
  display: flex;
  height: 27px;
}
.i-win button {
  width: 46px;
}
.i-win svg {
  width: 14px;
  height: 14px;
}
.i-bar {
  height: 43px;
  display: flex;
  align-items: center;
  padding: 0 6px 1px;
  color: #54595e;
}
.i-bar button {
  width: 32px;
}
.i-bar svg {
  width: 16px;
  height: 16px;
}
.i-bar .i-me {
  width: 22px;
  height: 22px;
}
.i-bar .dim {
  color: #b9bcbf;
}
.i-omni {
  flex: 1;
  height: 34px;
  border-radius: 17px;
  margin: 0 6px;
  background: #f6f6f6;
  display: flex;
  align-items: center;
  padding: 0 2px 0 10px;
  font-size: 13px;
}
.i-omni .warn {
  margin-right: 8px;
}
.i-sec {
  color: #5f6368;
  padding-right: 8px;
  border-right: 1px solid #9a9da1;
  margin-right: 10px;
}
.i-url {
  flex: 1;
  color: #5f6368;
  font-family: "Noto Sans", sans-serif;
}
.i-url b {
  color: #202124;
}

/* Pentaho console */
.puc {
  position: relative;
  height: 84px;
  border-top: 4px solid #cc0000;
  background: #fffff6;
  border-bottom: 1px solid #c4c4c0;
  box-shadow: 0 1px 2px #ccc;
  color: #555;
}
.puc-menu {
  display: flex;
  gap: 30px;
  padding: 7px 15px 0;
  font-size: 12px;
  line-height: 18px;
}
.puc-tools {
  display: flex;
  align-items: center;
  padding: 0 18px 0 14px;
  height: 57px;
  font-weight: 300;
}
.opened {
  font-size: 24px;
  gap: 8px;
}
.c12 {
  width: 12px;
  height: 12px;
}
.c8 {
  width: 8px;
  height: 8px;
}
.t-open {
  margin-left: 39px;
}
.t-new {
  margin-left: 23px;
}
.admin {
  margin-left: auto;
  font-size: 18px;
  gap: 9px;
}
.stage {
  flex: 1;
  display: flex;
  flex-direction: column;
  border: solid #bbb;
  border-width: 0 1px;
  padding: 3px 4px 2px 2px;
}
.doc-tabs {
  display: flex;
  height: 35px;
}
.doc-tab {
  width: 192px;
  border: 1px solid #ccc;
  border-bottom: 0;
  display: flex;
  align-items: center;
  justify-content: space-between;
  padding: 0 10px 2px 16px;
  font-size: 14px;
  color: #333;
}
.doc-tab svg {
  width: 12px;
  height: 12px;
  color: #bbb;
}
.doc-rest {
  flex: 1;
  border-bottom: 1px solid #ccc;
}
.doc {
  flex: 1;
  position: relative;
  border: 1px solid #ccc;
  border-top: 0;
  padding: 20px 0 16px;
  font-family: "Liberation Sans", Arial, sans-serif;
  color: #333;
}
.dash {
  width: 1140px;
  margin: 0 auto;
}
h1 {
  margin: 0 0 5px;
  height: 60px;
  border-radius: 12px;
  background: #005bc8;
  color: #fff;
  font-size: 30px;
  line-height: 33px;
  font-weight: 400;
  text-align: center;
}
.cols {
  display: grid;
  grid-template-columns: repeat(3, 1fr);
  gap: 30px;
  align-items: start;
}
.card {
  background: #edf2ee;
  border-radius: 12px;
}
.plot {
  width: 100%;
  font-family: "Open Sans", sans-serif;
  font-size: 10px;
}
.plot text {
  fill: #666;
}
.plot .ttl {
  fill: #000;
  text-anchor: middle;
}
.plot .end {
  text-anchor: end;
}
.grid {
  font-size: 14px;
  line-height: 20px;
}
.g-top {
  background: #edf2ee;
  border-radius: 12px 12px 0 0;
  font-weight: 700;
  padding-bottom: 5px;
}
.g-show {
  display: flex;
  gap: 4px;
  align-items: center;
}
.g-show select {
  width: 48px;
  height: 20px;
  border: 1px solid #767676;
  border-radius: 0;
  background: #fff;
  font: 700 14px "Liberation Sans", Arial, sans-serif;
  color: #333;
  padding: 0;
}
.g-search {
  display: flex;
  align-items: center;
  justify-content: flex-end;
  gap: 7px;
  margin-top: 5px;
}
.g-search input {
  width: 197px;
  height: 26px;
  border: 2px inset #767676;
  border-radius: 0;
  background: #fff;
  padding: 0;
}
table {
  width: 100%;
  table-layout: fixed;
  border-collapse: separate;
  border-spacing: 0;
  border: 1px solid #dde1de;
}
th,
td {
  border: 1px solid #dde1de;
  text-align: left;
  vertical-align: top;
}
thead {
  background: #edf2ee;
}
th {
  padding: 10px 18px 9px;
  vertical-align: bottom;
  position: relative;
  z-index: 0;
  border-top: 0;
}
th::before,
th::after {
  content: "";
  position: absolute;
  z-index: -1;
  right: 5px;
  border: solid transparent;
  border-width: 0 5px;
}
th::before {
  bottom: 40px;
  border-bottom: 6px solid #d8dedb;
}
th::after {
  bottom: 32px;
  border-top: 6px solid #d8dedb;
}
tbody {
  background: #fff;
}
td {
  padding: 8px 0 8px 10px;
}
.g-info {
  margin: 0;
  padding-top: 11px;
}
.g-pages {
  display: flex;
  justify-content: flex-end;
  gap: 2px;
  margin-top: 3px;
}
.g-pages button {
  padding: 7px 14px;
  border: 1px solid transparent;
  line-height: 20px;
}
.g-pages .off {
  color: #666;
}
.g-pages .cur {
  border-color: #cacaca;
  background: linear-gradient(#fff, #dcdcdc);
}
footer {
  margin-top: 5px;
  height: 50px;
  border-radius: 12px;
  background: #edf2ee;
  padding: 9px 15px;
  text-align: right;
  font-size: 14px;
  line-height: 20px;
}
footer a {
  color: #428bca;
  text-decoration: none;
}
.messenger {
  position: absolute;
  right: 2px;
  bottom: 7px;
  width: 114px;
  height: 46px;
  padding-top: 3px;
  background: #f8f8fb;
  box-shadow: 1px 2px 4px #777;
  font-weight: 700;
  font-size: 16px;
  color: #222;
}

/* remote taskbar */
.w10 {
  height: 40px;
  background: #000;
  color: #fff;
  display: flex;
}
.w10-start {
  width: 48px;
}
.w10-search {
  width: 344px;
  background: #f6f6f6;
  border: 1px solid #aaa;
  display: flex;
  align-items: center;
  gap: 10px;
  padding: 0 11px;
  color: #222;
}
.w10-search svg {
  width: 18px;
  height: 18px;
}
.w10-search input {
  flex: 1;
  border: 0;
  padding: 0;
  background: none;
  font: 15px "Open Sans", sans-serif;
  outline: 0;
}
.w10-search input::placeholder {
  color: #333;
  opacity: 1;
}
.w10-app {
  width: 49px;
}
.w10-app.line {
  background: linear-gradient(#76b9ed, #76b9ed) center bottom / 40px 2px no-repeat;
  margin-left: 1px;
}
.w10-app.focus {
  background: linear-gradient(#76b9ed, #76b9ed) center bottom / 100% 2px no-repeat #333;
}
.w10-tray,
.w11-tray {
  margin-left: auto;
  display: flex;
  align-items: center;
}
.t14 {
  width: 14px;
  height: 14px;
}
.t18 {
  width: 18px;
  height: 18px;
}
.t20 {
  width: 20px;
  height: 20px;
}
.w10-tray {
  gap: 9px;
  padding-right: 3px;
}
.w10-clock {
  width: 60px;
  text-align: center;
  font-size: 11px;
  line-height: 18px;
  padding-bottom: 1px;
}
.w10-note {
  width: 43px;
  height: 40px;
  border-right: 1px solid #555;
  padding: 12px 0 0 6px;
  position: relative;
}
.w10-note i {
  position: absolute;
  left: 13px;
  top: 18px;
  width: 17px;
  height: 17px;
  border-radius: 50%;
  background: #2b2b2b;
  border: 1px solid #777;
  font-size: 11px;
  line-height: 15px;
  text-align: center;
}

/* host taskbar */
.w11 {
  height: 60px;
  background: #202020;
  border-top: 1px solid #404040;
  color: #fff;
  display: flex;
  align-items: center;
}
.w11-start {
  margin: 0 18px 0 26px;
}
.w11-search {
  width: 125px;
  height: 40px;
  border-radius: 20px;
  background: #2d2d2d;
  gap: 6px;
  font-size: 14px;
  margin-right: 4px;
  padding-left: 2px;
}
.w11-search svg {
  width: 18px;
  height: 18px;
}
.w11-app {
  width: 47px;
  height: 50px;
  margin: 0 4px;
  position: relative;
}
.w11-app.active {
  background: #2d2d2d;
  border-radius: 5px;
  box-shadow: 3px 0 0 -1px #3a3a3a;
}
.w11-app.run::after,
.w11-app.active::after {
  content: "";
  position: absolute;
  bottom: 1px;
  width: 8px;
  height: 4px;
  border-radius: 2px;
  background: #999;
}
.w11-app.active::after {
  width: 20px;
  background: #4cc2ff;
}
.w11-app i {
  position: absolute;
  left: 25px;
  top: 3px;
  width: 20px;
  height: 20px;
  border-radius: 50%;
  background: #4cc2ff;
  color: #111;
  font-size: 13px;
  line-height: 20px;
  text-align: center;
}
.w11-app i.pink {
  background: #ff99a4;
}
.w11-app i.red {
  background: #da1f28;
}
.w11-app span {
  position: absolute;
  font-weight: 700;
}
.w11-app .new {
  left: 17px;
  top: 29px;
  width: 22px;
  text-align: center;
  font-size: 8px;
  line-height: 10px;
  color: #111;
}
.w11-app .ell {
  font-size: 24px;
  line-height: 30px;
}
.w11-app .dub {
  left: 10px;
  top: 17px;
  font-size: 12px;
  line-height: 16px;
}
.w11-tray {
  gap: 10px;
  padding-right: 24px;
}
.w11-tray .up {
  margin-right: 10px;
}
.w11-tray .cl {
  margin-right: 10px;
}
.w11-clock {
  text-align: right;
  font-size: 14px;
  line-height: 20px;
  width: 80px;
  padding: 0 2px 2px 0;
}
</style>
